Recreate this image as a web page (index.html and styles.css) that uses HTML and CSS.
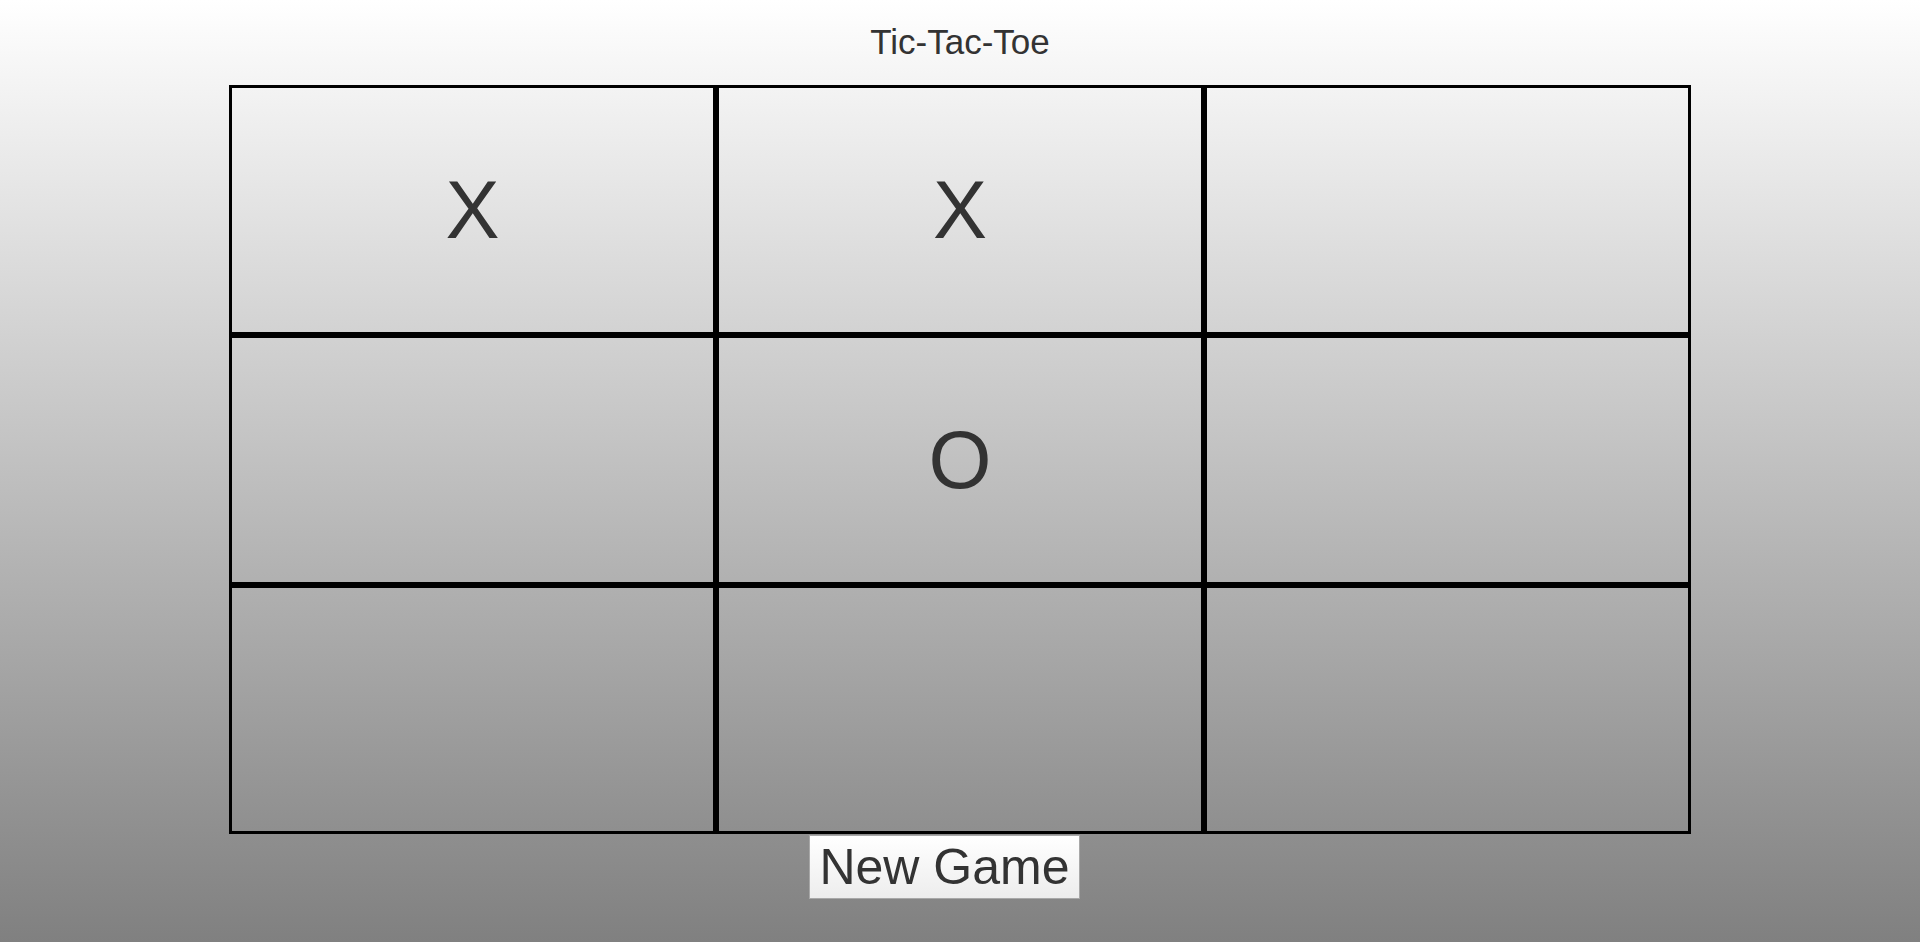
FILE: index.html
```html
<!DOCTYPE html>
<html lang="en">
<head>
<meta charset="utf-8">
<title>Tic-Tac-Toe</title>
<link rel="stylesheet" href="styles.css">
</head>
<body>
<div class="page">
  <div class="title">Tic-Tac-Toe</div>
  <div class="board">
    <div class="cell">X</div>
    <div class="cell">X</div>
    <div class="cell"></div>
    <div class="cell"></div>
    <div class="cell">O</div>
    <div class="cell"></div>
    <div class="cell"></div>
    <div class="cell"></div>
    <div class="cell"></div>
  </div>
  <div class="controls">
    <button class="new-game" type="button">New Game</button>
  </div>
</div>
</body>
</html>
```
FILE: styles.css
```css
html {
  height: 100%;
  background: linear-gradient(to bottom, #ffffff 0%, #808080 100%);
  background-attachment: fixed;
}
body {
  margin: 0;
  min-height: 100%;
  font-family: "Liberation Sans", Arial, sans-serif;
  color: #333333;
}
.page {
  display: flex;
  flex-direction: column;
  align-items: center;
}
.title {
  margin-top: 22px;
  font-size: 35px;
  line-height: 40px;
  height: 40px;
  margin-bottom: 23px;
}
.board {
  display: grid;
  grid-template-columns: 487px 488px 487px;
  grid-template-rows: 250px 250px 249px;
}
.cell {
  box-sizing: border-box;
  border: 3px solid #000000;
  display: flex;
  align-items: center;
  justify-content: center;
  font-size: 81px;
  line-height: 1;
  color: #333333;
}
.controls {
  display: flex;
  justify-content: center;
  margin-top: 1px;
}
.new-game {
  margin: 0 31px 0 0;
  font-family: "Liberation Sans", Arial, sans-serif;
  font-size: 50px;
  line-height: 55px;
  color: #333333;
  padding: 4px 9px 3px 9px;
  border: 1px solid #a8a8a8;
  border-radius: 0;
  background: linear-gradient(to bottom, #ffffff 0%, #ededed 100%);
}
```
